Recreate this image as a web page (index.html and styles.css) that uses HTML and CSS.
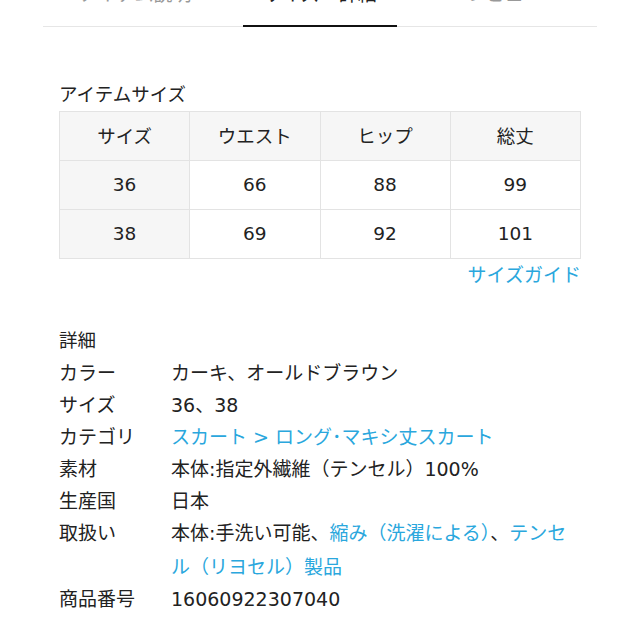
FILE: index.html
```html
<!DOCTYPE html>
<html lang="ja">
<head>
<meta charset="utf-8">
<link rel="stylesheet" href="styles.css">
</head>
<body>
<nav class="tabs">
  <div class="tab">アイテム説明</div>
  <div class="tab active">サイズ・詳細</div>
  <div class="tab">レビュー</div>
</nav>
<main class="content">
  <h2 class="title">アイテムサイズ</h2>
  <table class="size-table">
    <tr><th>サイズ</th><th>ウエスト</th><th>ヒップ</th><th>総丈</th></tr>
    <tr><th>36</th><td>66</td><td>88</td><td>99</td></tr>
    <tr><th>38</th><td>69</td><td>92</td><td>101</td></tr>
  </table>
  <div class="guide"><a class="link">サイズガイド</a></div>
  <h2 class="title detail-title">詳細</h2>
  <dl class="details">
    <div class="row"><dt>カラー</dt><dd>カーキ、オールドブラウン</dd></div>
    <div class="row"><dt>サイズ</dt><dd>36、38</dd></div>
    <div class="row"><dt>カテゴリ</dt><dd><a class="link">スカート</a> <span class="link">&gt;</span> <a class="link">ロング･マキシ丈スカート</a></dd></div>
    <div class="row"><dt>素材</dt><dd>本体:指定外繊維（テンセル）100%</dd></div>
    <div class="row"><dt>生産国</dt><dd>日本</dd></div>
    <div class="row"><dt>取扱い</dt><dd>本体:手洗い可能、<a class="link">縮み（洗濯による）</a>、<a class="link">テンセル（リヨセル）製品</a></dd></div>
    <div class="row"><dt>商品番号</dt><dd>16060922307040</dd></div>
  </dl>
</main>
</body>
</html>
```
FILE: styles.css
```css
* { box-sizing: border-box; }
body {
  margin: 0;
  background: #fff;
  color: #222;
  font-family: "DejaVu Sans", "Noto Sans CJK JP", sans-serif;
  font-size: 19px;
  overflow: hidden;
}
.tabs {
  display: flex;
  margin: -19px 43px 0;
  border-bottom: 1px solid #e6e6e6;
}
.tab {
  flex: 1;
  position: relative;
  text-align: center;
  line-height: 26px;
  padding-bottom: 19px;
  color: #999;
}
.tab.active { color: #222; }
.tab.active::after {
  content: "";
  position: absolute;
  left: 15px;
  right: 15px;
  bottom: -1px;
  height: 2px;
  background: #111;
}
.content {
  padding: 55px 59px 0;
}
.title {
  margin: 0;
  font-size: 18.5px;
  font-weight: normal;
  line-height: 26px;
}
.size-table {
  width: 100%;
  margin-top: 3px;
  border-collapse: collapse;
  table-layout: fixed;
}
.size-table th,
.size-table td {
  border: 1px solid #e3e3e3;
  height: 49px;
  text-align: center;
  font-weight: normal;
  font-size: 18.5px;
  padding: 0 0 2px;
}
.size-table th { background: #f6f6f6; }
.size-table td { background: #fff; }
.guide {
  text-align: right;
  line-height: 26px;
  margin-top: 3px;
}
.link { color: #2aa7dd; text-decoration: none; }
.detail-title { margin-top: 40px; }
.details {
  margin: 2px 0 0;
}
.row {
  display: flex;
  line-height: 34px;
  margin-bottom: -2px;
}
.row dt { width: 112px; flex: none; }
.row dd { margin: 0; flex: 1; }
```
